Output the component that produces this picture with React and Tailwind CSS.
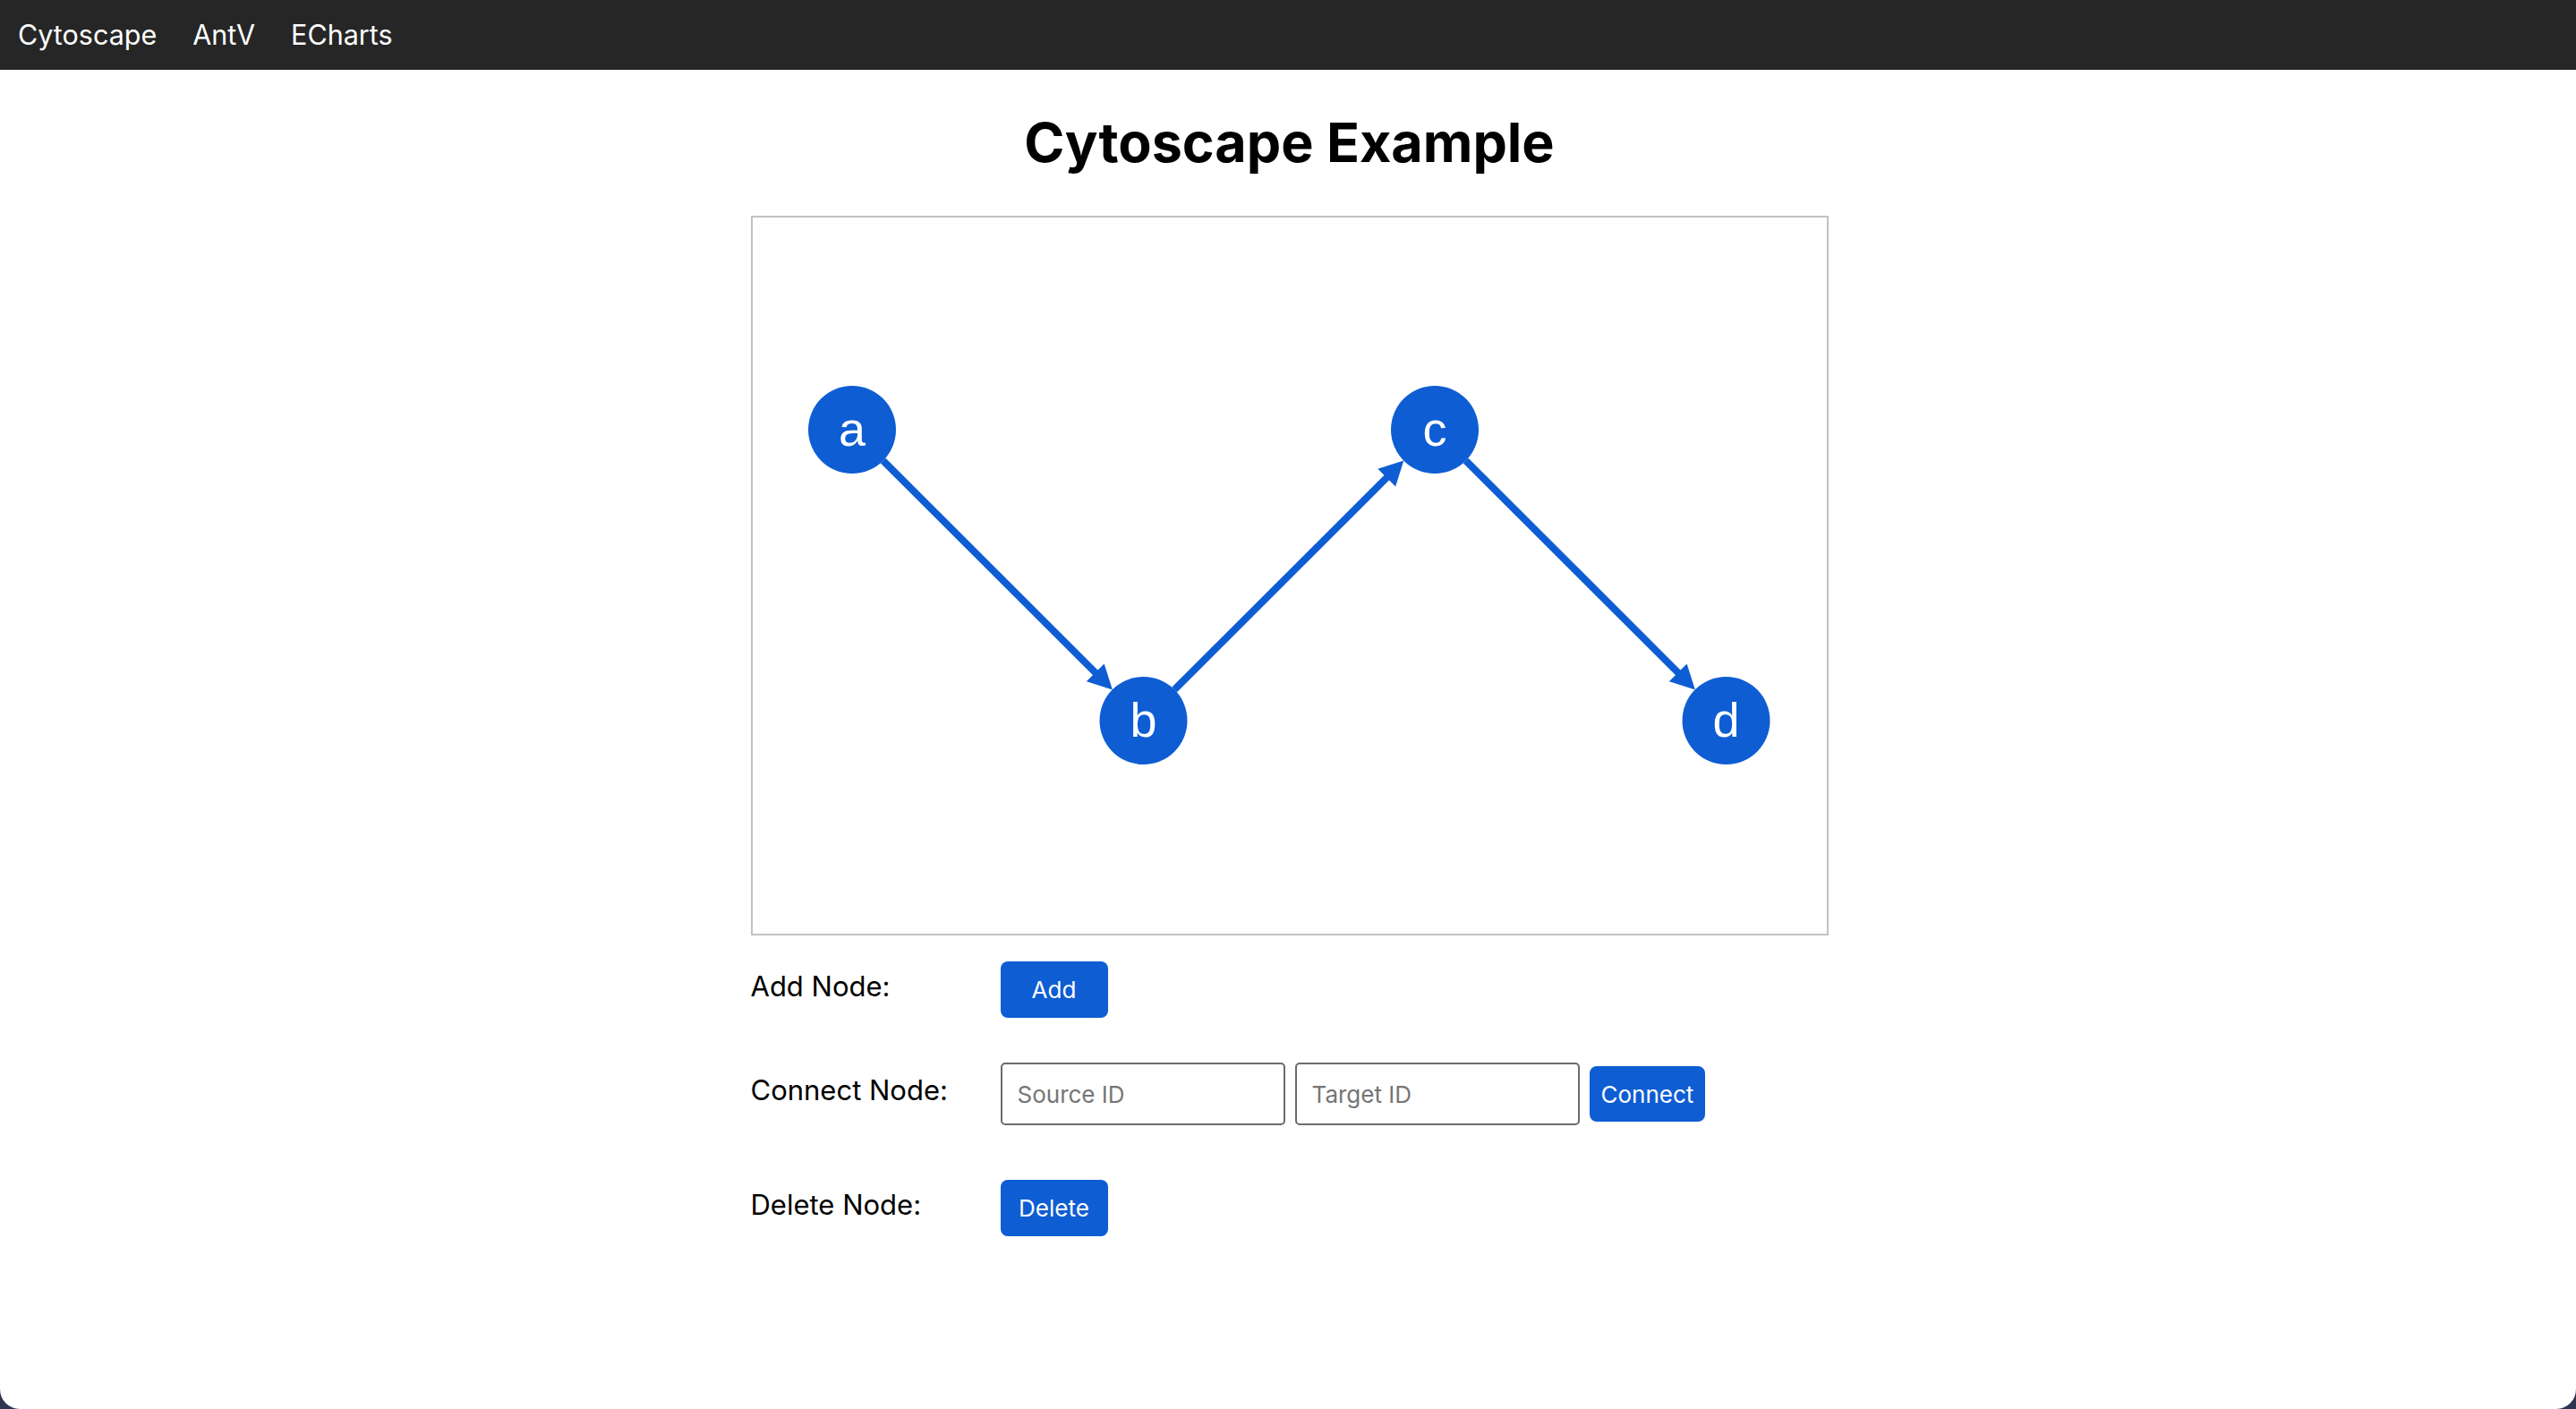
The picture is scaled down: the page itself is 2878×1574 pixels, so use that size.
import React from "react";

const NODES = [
  { id: "a", x: 111, y: 237 },
  { id: "b", x: 436.5, y: 562 },
  { id: "c", x: 762, y: 237 },
  { id: "d", x: 1087.5, y: 562 },
];
const EDGES = [
  ["a", "b"],
  ["b", "c"],
  ["c", "d"],
];
const R = 49;
const BLUE = "#0e5dd3";

function Edge({ s, t }) {
  const dx = t.x - s.x;
  const dy = t.y - s.y;
  const len = Math.hypot(dx, dy);
  const ux = dx / len;
  const uy = dy / len;
  const px = -uy;
  const py = ux;
  const sx = s.x + ux * R;
  const sy = s.y + uy * R;
  const tx = t.x - ux * R;
  const ty = t.y - uy * R;
  const AL = 27;
  const AW = 14;
  const bx = tx - ux * AL;
  const by = ty - uy * AL;
  const pts = `${tx},${ty} ${bx + px * AW},${by + py * AW} ${bx - px * AW},${by - py * AW}`;
  return (
    <g>
      <line x1={sx} y1={sy} x2={bx + ux * 2} y2={by + uy * 2} stroke={BLUE} strokeWidth="8" />
      <polygon points={pts} fill={BLUE} />
    </g>
  );
}

function Graph() {
  const byId = Object.fromEntries(NODES.map((n) => [n.id, n]));
  return (
    <svg width="1200" height="800" viewBox="0 0 1200 800" className="block">
      {EDGES.map(([s, t]) => (
        <Edge key={s + t} s={byId[s]} t={byId[t]} />
      ))}
      {NODES.map((n) => (
        <g key={n.id}>
          <circle cx={n.x} cy={n.y} r={R} fill={BLUE} />
          <text
            x={n.x}
            y={n.y + 18}
            textAnchor="middle"
            fill="#ffffff"
            fontSize="54"
            fontFamily="'Liberation Sans', Arial, sans-serif"
          >
            {n.id}
          </text>
        </g>
      ))}
    </svg>
  );
}

export default function App() {
  return (
    <div className="h-[1574px] w-[2878px] overflow-hidden bg-[#2d3550] font-['Inter',sans-serif]">
      <div className="flex h-full flex-col rounded-b-[22px] bg-white">
        <nav className="flex h-[78px] items-center bg-[#262626]">
          {["Cytoscape", "AntV", "ECharts"].map((l) => (
            <a key={l} className="px-[20px] text-[30.5px] leading-none text-white">
              {l}
            </a>
          ))}
        </nav>
        <main className="flex flex-col items-center pl-[3px]">
          <h1 className="mt-[43px] mb-[43px] text-[61px] leading-[77px] font-bold text-black">
            Cytoscape Example
          </h1>
          <div className="w-[1204px] h-[804px] border-2 border-[#c2c2c2]">
            <Graph />
          </div>
          <div className="w-[1204px] flex flex-col">
            <div className="mt-[29px] flex items-center">
              <span className="w-[279px] pb-[8px] text-[31px] leading-[38px] text-black">Add Node:</span>
              <button className="h-[63px] w-[120px] rounded-[8px] bg-[#0e5dd3] text-[26px] text-white">
                Add
              </button>
            </div>
            <div className="mt-[50px] flex items-center">
              <span className="w-[279px] pb-[8px] text-[31px] leading-[38px] text-black">Connect Node:</span>
              <input
                placeholder="Source ID"
                className="h-[70px] w-[318px] rounded-[5px] border-2 border-[#6b6b6b] pl-[17px] text-[26px] placeholder:text-[#757575] outline-none"
              />
              <input
                placeholder="Target ID"
                className="ml-[11px] h-[70px] w-[318px] rounded-[5px] border-2 border-[#6b6b6b] pl-[17px] text-[26px] placeholder:text-[#757575] outline-none"
              />
              <button className="ml-[11px] h-[62px] rounded-[8px] bg-[#0e5dd3] px-[13px] text-[26px] text-white">
                Connect
              </button>
            </div>
            <div className="mt-[61px] flex items-center">
              <span className="w-[279px] pb-[8px] text-[31px] leading-[38px] text-black">Delete Node:</span>
              <button className="h-[63px] w-[120px] rounded-[8px] bg-[#0e5dd3] text-[26px] text-white">
                Delete
              </button>
            </div>
          </div>
        </main>
      </div>
    </div>
  );
}
